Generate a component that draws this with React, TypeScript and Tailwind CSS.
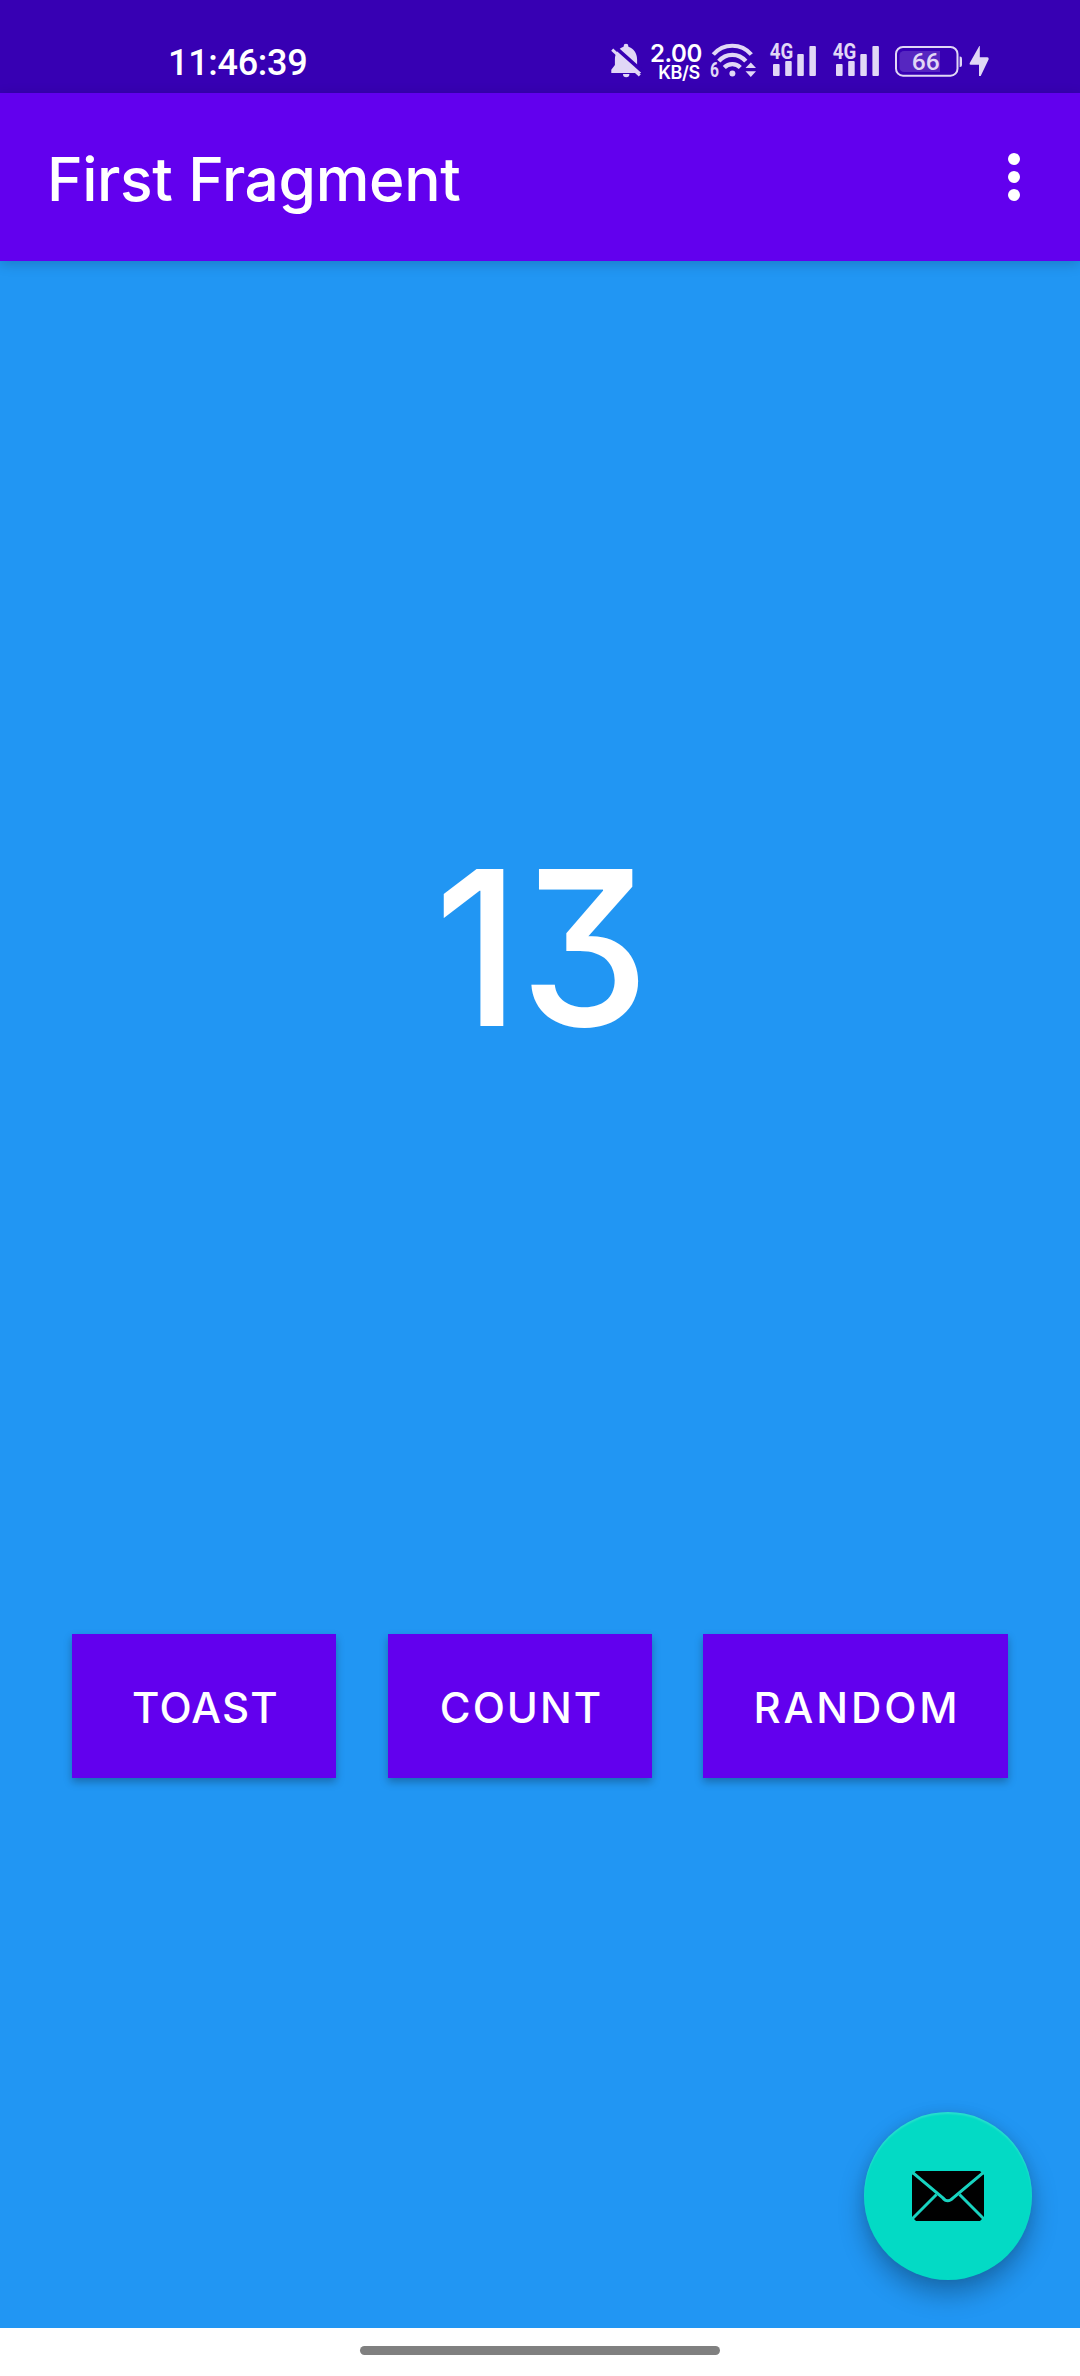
import React from "react";

const TINT = "#e1d7f6";

function BellOff() {
  return (
    <svg className="h-[40px] w-[34px] shrink-0" viewBox="610 42 34 40" fill="none">
      <path
        d="M611.3 73v-3.200l3.600-4.800V59.500C614.900 53 618.600 48.200 623.600 46.800V46.200a2.400 2.400 0 0 1 4.800 0v.6C633.400 48.200 637.100 53 637.100 59.500V65l4 4.300V73z"
        fill={TINT}
      />
      <path d="M623 74h6.400a3.200 3.200 0 0 1-6.400 0z" fill={TINT} />
      <path d="M614.600 46.700L643.500 72.400" stroke="#3700b3" strokeWidth="3.600" />
      <path d="M612.200 49.600L639.800 75.300" stroke={TINT} strokeWidth="3" />
    </svg>
  );
}

function Wifi() {
  return (
    <svg className="ml-[6px] h-[40px] w-[50px] shrink-0 overflow-visible" viewBox="708 42 50 40" fill="none">
      <g stroke={TINT} strokeWidth="4.200">
        <path d="M713.300 54.500A25 25 0 0 1 751.300 54.500" />
        <path d="M718.800 61.200A17.500 17.500 0 0 1 745.800 61.200" />
        <path d="M724.300 67.500A11 11 0 0 1 740.300 67.500" />
      </g>
      <circle cx="732.400" cy="73.400" r="3" fill={TINT} />
      <path d="M745.500 68l5.300-5.500L756 68zM745.500 71.300H756l-5.200 5.600z" fill={TINT} />
      <text x="710" y="76.600" fontSize="20" fontWeight="700" fontFamily="Roboto, sans-serif" textLength="9" lengthAdjust="spacingAndGlyphs" fill={TINT}>
        6
      </text>
    </svg>
  );
}

function Signal({ className }: { className: string }) {
  return (
    <svg className={"h-[40px] w-[48px] shrink-0 overflow-visible " + className} viewBox="769 42 48 40" fill={TINT}>
      <text x="769.800" y="59.400" fontSize="21.500" fontWeight="700" fontFamily="Roboto, sans-serif" textLength="23.500" lengthAdjust="spacingAndGlyphs">
        4G
      </text>
      <rect x="773" y="64" width="6.600" height="12" rx="1" />
      <rect x="785.200" y="61" width="6.500" height="15" rx="1" />
      <rect x="797.300" y="54" width="6.500" height="22" rx="1" />
      <rect x="809.400" y="46" width="6.500" height="30" rx="1" />
    </svg>
  );
}

function Battery() {
  return (
    <svg className="ml-[14px] h-[40px] w-[69px] shrink-0 overflow-visible" viewBox="894 42 69 40" fill="none">
      <rect x="896" y="47" width="61.500" height="28.700" rx="7" stroke={TINT} strokeWidth="2" />
      <path d="M904 51h36v21h-36a4.500 4.500 0 0 1-4.500-4.500v-12A4.500 4.500 0 0 1 904 51z" fill="#5626c0" />
      <path d="M959.600 56.500h.4a2 2 0 0 1 2 2v6.500a2 2 0 0 1-2 2h-.4z" fill={TINT} />
      <text x="911.800" y="70.400" fontSize="24.500" fontWeight="500" fontFamily="Roboto, sans-serif" textLength="28" lengthAdjust="spacingAndGlyphs" fill={TINT}>
        66
      </text>
    </svg>
  );
}

function Bolt() {
  return (
    <svg className="ml-[5px] h-[40px] w-[22px] shrink-0" viewBox="968 42 22 40" fill={TINT}>
      <path d="M979.300 46L969.600 63.200Q969.300 64.700 970.800 64.700H979V76h1.700L988.700 59.200Q989 57.300 987.300 57.300H979.800V46z" />
    </svg>
  );
}

function StatusBar() {
  return (
    <div className="flex h-[93px] shrink-0 items-start bg-[#3700b3] pl-[168px] text-white">
      <span className="mt-[42px] w-[139px] whitespace-nowrap font-[Roboto] text-[36px] leading-[42px] font-medium tracking-[-0.3px]">
        11:46:39
      </span>
      <div className="mt-[42px] ml-[303px] flex">
        <BellOff />
        <div className="ml-[7px] flex w-[51px] flex-col items-end font-[Inter] whitespace-nowrap">
          <span className="h-[21px] text-[24px] leading-[23px] font-semibold tracking-[-0.4px]">2.00</span>
          <span className="mr-[2px] text-[18px] leading-[20px] font-semibold tracking-[-0.3px]">KB/S</span>
        </div>
        <Wifi />
        <Signal className="ml-[11px]" />
        <Signal className="ml-[15px]" />
        <Battery />
        <Bolt />
      </div>
    </div>
  );
}

function AppBar() {
  return (
    <header className="relative z-10 flex h-[168px] shrink-0 items-center justify-between bg-[#6200ee] pr-[60px] pl-[47px] text-white shadow-[0_3px_12px_rgba(0,0,0,0.18)]">
      <h1 className="mt-[3px] font-[Inter] text-[60.500px] leading-[72px] font-[450] tracking-[-0.400px] whitespace-nowrap">
        First Fragment
      </h1>
      <button aria-label="More options" className="flex flex-col gap-[6px]">
        <span className="size-3 rounded-full bg-white" />
        <span className="size-3 rounded-full bg-white" />
        <span className="size-3 rounded-full bg-white" />
      </button>
    </header>
  );
}

function ActionButton({ label, className }: { label: string; className: string }) {
  return (
    <button
      className={
        "flex h-[144px] items-center justify-center bg-[#6200ee] pt-[2px] font-[Inter] text-[42px] font-medium text-white shadow-[0_4px_8px_rgba(0,0,0,0.28)] " +
        className
      }
    >
      {label}
    </button>
  );
}

function Mail() {
  return (
    <svg className="h-[50px] w-[72px]" viewBox="0 0 72 50" fill="none">
      <path d="M4 0H68L72 4V46L68 50H4L0 46V4z" fill="#000" />
      <g stroke="#18d3c0" strokeWidth="3">
        <path d="M0 1L30.500 26.500Q35.500 33 41.500 26.500L72 1" />
        <path d="M24.500 23.500L0 48M47.500 23.500L72 48" />
      </g>
    </svg>
  );
}

export default function App() {
  return (
    <div className="flex h-[2376px] w-[1080px] flex-col overflow-hidden bg-[#2196f3]">
      <StatusBar />
      <AppBar />
      <main className="flex grow flex-col text-white">
        <div className="mt-[557px] flex h-[260px] scale-x-[0.955] items-center justify-center pl-[4px] font-[Inter] text-[216px] leading-[260px] font-medium [font-feature-settings:'cv09']">
          13
        </div>
        <div className="mt-[556px] flex pl-[72px]">
          <ActionButton label="TOAST" className="w-[264px] pl-[3px] tracking-[1.200px]" />
          <ActionButton label="COUNT" className="ml-[52px] w-[264px] pl-[3px] tracking-[2px]" />
          <ActionButton label="RANDOM" className="ml-[51px] w-[305px] pl-[3px] tracking-[2.900px]" />
        </div>
        <button
          aria-label="Send mail"
          className="mt-[334px] mr-[48px] flex size-[168px] items-center justify-center self-end rounded-full bg-[#03dac5] shadow-[0_14px_26px_rgba(0,0,0,0.28),0_0_12px_rgba(0,0,0,0.08),inset_0_2px_2px_rgba(255,255,255,0.15)]"
        >
          <Mail />
        </button>
      </main>
      <div className="flex h-[48px] shrink-0 justify-center bg-white pt-[18px]">
        <div className="h-[9px] w-[360px] rounded-full bg-[#808080]" />
      </div>
    </div>
  );
}
